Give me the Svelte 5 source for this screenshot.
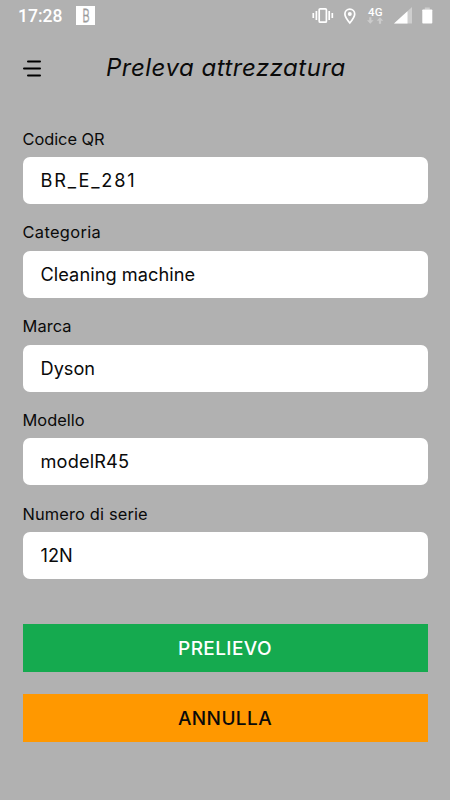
<script lang="ts">
	interface Field {
		id: string;
		label: string;
		value: string;
		labelSpacing: number;
		valueSpacing: number;
	}

	let fields: Field[] = $state([
		{ id: 'qr', label: 'Codice QR', value: 'BR_E_281', labelSpacing: -0.05, valueSpacing: 1.8 },
		{ id: 'category', label: 'Categoria', value: 'Cleaning machine', labelSpacing: 0.35, valueSpacing: 0.05 },
		{ id: 'brand', label: 'Marca', value: 'Dyson', labelSpacing: 0.1, valueSpacing: 0 },
		{ id: 'model', label: 'Modello', value: 'modelR45', labelSpacing: 0, valueSpacing: 0.15 },
		{ id: 'serial', label: 'Numero di serie', value: '12N', labelSpacing: 0.15, valueSpacing: 0 }
	]);
</script>

<div class="screen">
	<div class="status-bar">
		<span class="clock">17:28</span>
		<svg class="app-icon" width="19" height="19" viewBox="0 0 19 19">
			<rect width="19" height="19" fill="#fff" />
			<text x="6.5" y="16" textLength="7" lengthAdjust="spacingAndGlyphs">B</text>
		</svg>
		<svg class="system-icons" width="124" height="20" viewBox="0 0 124 20" fill="none">
			<g stroke="#fff" stroke-width="1.7">
				<rect x="7.2" y="2.8" width="7.2" height="13.4" rx="1" />
				<path d="M4.4 5v9M1.3 7v5M17.2 5v9M20.3 7v5" />
			</g>
			<path
				d="M37.8 17c-3-3.5-4.9-6.2-4.9-8.9a4.9 4.9 0 0 1 9.8 0c0 2.7-1.9 5.4-4.9 8.9z"
				stroke="#fff"
				stroke-width="1.7"
			/>
			<circle cx="37.8" cy="7.9" r="2" fill="#fff" />
			<text class="network" x="56" y="9.7" textLength="14.5">4G</text>
			<path
				d="M57.2 11.3h2.2v3h2.2l-3.3 3.4-3.3-3.4h2.2zM66.9 17.7h2.2v-3h2.2l-3.3-3.4-3.3 3.4h2.2z"
				fill="#cbcbcb"
			/>
			<path d="M100 1v16.5H82z" fill="#cecece" />
			<path d="M95.5 5.2v12.3H82z" fill="#fff" />
			<path d="M112.8 1.5h5v2h-5z" fill="#cecece" />
			<rect x="110.3" y="3.5" width="10" height="14" rx=".8" fill="#fff" />
		</svg>
	</div>

	<header class="header">
		<button class="menu-btn" aria-label="Menu">
			<svg width="20" height="17" viewBox="0 0 20 17">
				<path d="M6 1.5h12M2 8.500h16M6 15.500h12" stroke="#000" stroke-width="2" stroke-linecap="round" />
			</svg>
		</button>
		<h1 class="title">Preleva attrezzatura</h1>
	</header>

	<form class="form" onsubmit={(e) => e.preventDefault()}>
		{#each fields as field (field.id)}
			<div class="field">
				<label for={field.id} style="letter-spacing: {field.labelSpacing}px">{field.label}</label>
				<input id={field.id} bind:value={field.value} style="letter-spacing: {field.valueSpacing}px" />
			</div>
		{/each}

		<div class="actions">
			<button class="btn btn-confirm" type="submit">PRELIEVO</button>
			<button class="btn btn-cancel" type="button">ANNULLA</button>
		</div>
	</form>
</div>

<style>
	:global(body) {
		background: #b1b1b1;
	}

	.screen {
		box-sizing: border-box;
		height: 800px;
		background: #b1b1b1;
		color: #0a0a0a;
		font-family: Inter, Roboto, sans-serif;
		overflow: hidden;
	}

	.status-bar {
		display: flex;
		align-items: center;
		height: 31px;
		padding: 0 14px 0 18px;
		font-family: Roboto, sans-serif;
	}

	.clock {
		width: 58px;
		color: #fff;
		font-size: 17.5px;
		font-weight: 500;
	}

	.app-icon text {
		fill: none;
		stroke: #999;
		stroke-width: 0.8;
		font-size: 18px;
		font-weight: 300;
	}

	.system-icons {
		margin-left: auto;
	}

	.network {
		fill: #fff;
		font-size: 11.5px;
		font-weight: 500;
	}

	.header {
		display: flex;
		align-items: center;
		height: 74px;
		padding-left: 22px;
	}

	.menu-btn {
		display: flex;
		padding: 0;
		border: none;
		background: none;
	}

	.title {
		margin: 0 0 0 64px;
		font-size: 24px;
		font-style: italic;
		font-weight: 400;
		line-height: 30px;
		letter-spacing: 0.5px;
		font-feature-settings: 'cv11';
		white-space: nowrap;
	}

	.form {
		padding: 22.5px 22.5px 0;
	}

	.field {
		display: flex;
		flex-direction: column;
		height: 93.75px;
	}

	label {
		height: 29.5px;
		font-size: 16.4px;
		line-height: 22px;
		white-space: nowrap;
	}

	input {
		box-sizing: border-box;
		width: 100%;
		height: 47px;
		padding: 0 17px 1px 18px;
		border: none;
		border-radius: 7px;
		background: #fff;
		color: #0a0a0a;
		font-family: inherit;
		font-size: 18.2px;
	}

	.actions {
		display: flex;
		flex-direction: column;
		gap: 22.5px;
		padding-top: 28px;
	}

	.btn {
		height: 47.5px;
		padding: 0;
		border: none;
		font-family: inherit;
		font-size: 19px;
		font-weight: 500;
		letter-spacing: 0.4px;
	}

	.btn-confirm {
		background: #15aa4f;
		color: #fff;
	}

	.btn-cancel {
		background: #ff9800;
		color: #0a0a0a;
	}
</style>
